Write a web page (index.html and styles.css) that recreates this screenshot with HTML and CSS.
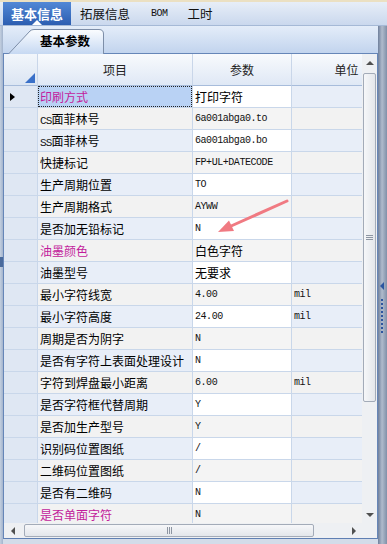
FILE: index.html
```html
<!DOCTYPE html>
<html lang="zh-CN">
<head>
  <meta charset="UTF-8">
  <title>基本信息</title>
  <link rel="stylesheet" href="styles.css">
</head>
<body>

  <div class="tabs">
    <div class="tab active">基本信息</div>
    <div class="tab">拓展信息</div>
    <div class="tab latin">BOM</div>
    <div class="tab">工时</div>
  </div>

  <div class="main">
    <div class="left-edge"><span class="edge-grip"></span></div>

    <div class="panel">
      <div class="subtabs">
        <div class="subtab">
          <svg class="subtab-shape" width="97" height="25" viewBox="0 0 97 25">
            <defs>
              <linearGradient id="tabFill" x1="0" y1="0" x2="0" y2="1">
                <stop offset="0" stop-color="#fbfdff"/>
                <stop offset="1" stop-color="#c6d8f2"/>
              </linearGradient>
            </defs>
            <path d="M0.5 25 L22 2 Q23.5 0.5 26 0.5 L91 0.5 Q95.5 0.5 95.5 5 L95.5 25" fill="url(#tabFill)" stroke="#7d8ea8"/>
          </svg>
          <span class="subtab-label">基本参数</span>
        </div>
      </div>

      <div class="grid-box">
        <div class="grid-body">
          <div class="viewport">
            <div class="grid" id="grid">
              <div class="hcell corner"></div>
              <div class="hcell">项目</div>
              <div class="hcell">参数</div>
              <div class="hcell">单位</div>
            </div>
          </div>
          <div class="vscroll">
            <div class="sbtn"><span class="tri up"></span></div>
            <div class="vthumb"><span class="grip-h"></span></div>
            <div class="sfill"></div>
            <div class="sbtn"><span class="tri down"></span></div>
          </div>
        </div>
        <div class="hscroll-row">
          <div class="hscroll">
            <div class="sbtn-h"><span class="tri left"></span></div>
            <div class="hthumb"><span class="grip-v"></span></div>
            <div class="sfill"></div>
            <div class="sbtn-h"><span class="tri right"></span></div>
          </div>
          <div class="scroll-corner"></div>
        </div>
      </div>
    </div>

    <div class="splitter">
      <span class="split-arrow"></span>
      <span class="split-dots"></span>
    </div>
  </div>

  <svg class="annotation" width="387" height="544" viewBox="0 0 387 544">
    <line x1="287" y1="201" x2="230" y2="226.5" stroke="#f07a82" stroke-width="3" stroke-linecap="round"/>
    <polygon points="218,232 229,220.5 234,231" fill="#f07a82"/>
  </svg>

  <script>
    const rows = [
      ["印刷方式", "打印字符", "", true],
      ["CS面菲林号", "6a001abga0.to", ""],
      ["SS面菲林号", "6a001abga0.bo", ""],
      ["快捷标记", "FP+UL+DATECODE", ""],
      ["生产周期位置", "TO", ""],
      ["生产周期格式", "AYWW", ""],
      ["是否加无铅标记", "N", ""],
      ["油墨颜色", "白色字符", "", true],
      ["油墨型号", "无要求", ""],
      ["最小字符线宽", "4.00", "mil"],
      ["最小字符高度", "24.00", "mil"],
      ["周期是否为阴字", "N", ""],
      ["是否有字符上表面处理设计", "N", ""],
      ["字符到焊盘最小距离", "6.00", "mil"],
      ["是否字符框代替周期", "Y", ""],
      ["是否加生产型号", "Y", ""],
      ["识别码位置图纸", "/", ""],
      ["二维码位置图纸", "/", ""],
      ["是否有二维码", "N", ""],
      ["是否单面字符", "N", "", true]
    ];

    const grid = document.getElementById("grid");
    const hasCjk = s => /[\u4e00-\u9fff]/.test(s);

    function addCell(classes, html) {
      const cell = document.createElement("div");
      cell.className = "cell " + classes;
      cell.innerHTML = html;
      grid.appendChild(cell);
      return cell;
    }

    rows.forEach(([item, value, unit, pink], i) => {
      const stripe = i % 2 === 0 ? "odd" : "even";
      const sel = i === 0 ? " selected" : "";
      addCell("ind " + stripe + sel, "");
      const itemHtml = item.replace(/[A-Za-z0-9]+/g, m => `<span class="mono">${m}</span>`);
      addCell("item " + stripe + sel + (pink ? " pink" : ""), itemHtml);
      addCell("value " + stripe + (hasCjk(value) ? "" : " mono"), value);
      addCell("unit " + stripe + " mono", unit);
    });
  </script>
</body>
</html>
```

FILE: styles.css
```css
body {
  margin: 0;
  width: 387px;
  height: 544px;
  overflow: hidden;
  position: relative;
  font-family: "Noto Sans CJK SC", sans-serif;
  font-size: 12px;
  color: #000;
  background: #d3dce9;
}

/* top tab strip */
.tabs {
  height: 23px;
  border-top: 2px solid #ebe0c2;
  border-bottom: 1px solid #a5b9d6;
  background: linear-gradient(#e7eef8, #cad8ed);
  display: flex;
  padding-left: 3px;
}

.tab {
  display: flex;
  align-items: center;
  padding: 0 9px;
  font-size: 12.5px;
  color: #111;
}

.tab.latin {
  font-family: "Liberation Mono", monospace;
  font-size: 10px;
  letter-spacing: -0.5px;
  padding: 0 11px 0 12px;
}

.tab.active {
  position: relative;
  width: 68px;
  box-sizing: border-box;
  justify-content: center;
  padding: 0;
  background: linear-gradient(#5288d6, #2c5eb1);
  color: #fff;
  font-weight: bold;
  font-size: 13px;
}

.tab.active::after {
  content: "";
  position: absolute;
  bottom: 0;
  left: 50%;
  margin-left: -5px;
  border-left: 5px solid transparent;
  border-right: 5px solid transparent;
  border-bottom: 5px solid #fff;
}

.main {
  display: flex;
  height: 518px;
}

.left-edge {
  width: 3px;
  background: linear-gradient(to right, #c3cfe0, #a3b4cd);
  position: relative;
}

.edge-grip {
  position: absolute;
  left: 0;
  top: 231px;
  width: 3px;
  height: 10px;
  background: #4a6a9c;
}

.panel {
  width: 375px;
  display: flex;
  flex-direction: column;
}

/* sub tab strip */
.subtabs {
  height: 27px;
  background: linear-gradient(#e4edf9, #c2d4ee);
  display: flex;
  align-items: flex-end;
  padding-left: 5px;
}

.subtab {
  position: relative;
  width: 97px;
  height: 25px;
  margin-bottom: -1px;
}

.subtab-shape {
  position: absolute;
  left: 0;
  top: 0;
}

.subtab-label {
  position: relative;
  display: block;
  padding-left: 32px;
  line-height: 24px;
  font-size: 12.5px;
  font-weight: bold;
}

/* grid */
.grid-box {
  border-top: 1px solid #6686b8;
  border-left: 1px solid #6686b8;
  border-right: 1px solid #6686b8;
  border-bottom: 1px solid #5f7fb3;
  display: flex;
  flex-direction: column;
}

.grid-body {
  display: flex;
  height: 469px;
}

.viewport {
  width: 358px;
  overflow: hidden;
}

.grid {
  display: grid;
  grid-template-columns: 34px 155px 99px 110px;
  grid-template-rows: 32px;
  grid-auto-rows: 22px;
  width: 398px;
}

.hcell {
  box-sizing: border-box;
  border-right: 1px solid #c9d6e9;
  border-bottom: 1px solid #a7bcdb;
  background: linear-gradient(#f8fafd, #dfe8f5);
  display: flex;
  align-items: center;
  justify-content: center;
  color: #222;
  font-size: 12px;
}

.hcell.corner {
  position: relative;
  background: linear-gradient(#f2f6fb, #dbe5f3);
}

.hcell.corner::after {
  content: "";
  position: absolute;
  right: 2px;
  bottom: 2px;
  border-left: 10px solid transparent;
  border-bottom: 10px solid #3a70c8;
}

.cell {
  position: relative;
  box-sizing: border-box;
  border-right: 1px solid #c9d7ea;
  border-bottom: 1px solid #c9d7ea;
  padding-left: 2px;
  line-height: 21px;
  white-space: nowrap;
  overflow: hidden;
}

.cell.mono,
.mono {
  font-family: "Liberation Mono", monospace;
  font-size: 10px;
  letter-spacing: -0.45px;
  color: #111;
}

.cell.item .mono {
  font-size: 11px;
  letter-spacing: -0.8px;
}

.cell.odd { background: #e8eef8; }
.cell.even { background: #f2f2f2; }
.cell.value.odd { background: #fff; }
.cell.value.even { background: #f4f4f4; }
.cell.ind { background: #dfe7f3; }

.cell.item.selected { background: #b9d2f4; }

.cell.item.selected::after {
  content: "";
  position: absolute;
  left: 0;
  top: 0;
  right: 0;
  bottom: 0;
  border: 1px dotted #222;
}

.cell.ind.selected::before {
  content: "";
  position: absolute;
  left: 6px;
  top: 7px;
  border-top: 4px solid transparent;
  border-bottom: 4px solid transparent;
  border-left: 5px solid #000;
}

.cell.pink { color: #c21c9c; }
.cell.pink .mono { color: #c21c9c; }

/* scrollbars */
.vscroll {
  width: 15px;
  background: #eef0f3;
  display: flex;
  flex-direction: column;
  align-items: center;
}

.sbtn {
  height: 17px;
  width: 15px;
  display: flex;
  align-items: center;
  justify-content: center;
}

.sfill { flex: 1; }

.vthumb {
  margin-top: 2px;
  width: 11px;
  height: 327px;
  border: 1px solid #a3abb8;
  border-radius: 2px;
  background: linear-gradient(to right, #f6f7f9, #e3e6eb);
  display: flex;
  align-items: center;
  justify-content: center;
}

.grip-h {
  width: 7px;
  height: 5px;
  border-top: 1px solid #8d95a2;
  border-bottom: 1px solid #8d95a2;
  box-sizing: border-box;
  background: linear-gradient(#8d95a2, #8d95a2) center / 100% 1px no-repeat;
}

.hscroll-row {
  display: flex;
  height: 15px;
}

.hscroll {
  width: 358px;
  display: flex;
  align-items: center;
  background: #eef0f3;
}

.sbtn-h {
  width: 17px;
  height: 15px;
  display: flex;
  align-items: center;
  justify-content: center;
}

.hthumb {
  margin-left: 3px;
  width: 288px;
  height: 11px;
  border: 1px solid #a3abb8;
  border-radius: 2px;
  background: linear-gradient(#f6f7f9, #e3e6eb);
  display: flex;
  align-items: center;
  justify-content: center;
}

.grip-v {
  width: 5px;
  height: 7px;
  border-left: 1px solid #8d95a2;
  border-right: 1px solid #8d95a2;
  box-sizing: border-box;
  background: linear-gradient(to right, #8d95a2, #8d95a2) center / 1px 100% no-repeat;
}

.scroll-corner {
  width: 15px;
  background: #eef0f3;
}

.tri {
  width: 0;
  height: 0;
}

.tri.up {
  border-left: 4px solid transparent;
  border-right: 4px solid transparent;
  border-bottom: 4px solid #505050;
}

.tri.down {
  border-left: 4px solid transparent;
  border-right: 4px solid transparent;
  border-top: 4px solid #505050;
}

.tri.left {
  border-top: 4px solid transparent;
  border-bottom: 4px solid transparent;
  border-right: 4px solid #505050;
}

.tri.right {
  border-top: 4px solid transparent;
  border-bottom: 4px solid transparent;
  border-left: 4px solid #505050;
}

/* right splitter */
.splitter {
  width: 9px;
  position: relative;
  background: linear-gradient(to right, #6f809c, #b0bbcc 45%, #8190a8);
}

.split-arrow {
  position: absolute;
  left: 2px;
  top: 256px;
  border-top: 4px solid transparent;
  border-bottom: 4px solid transparent;
  border-right: 4px solid #2d56a0;
}

.split-dots {
  position: absolute;
  left: 3px;
  top: 273px;
  width: 2px;
  height: 36px;
  background: repeating-linear-gradient(#2d56a0 0 2px, transparent 2px 4px);
}

.annotation {
  position: absolute;
  left: 0;
  top: 0;
  pointer-events: none;
}
```
